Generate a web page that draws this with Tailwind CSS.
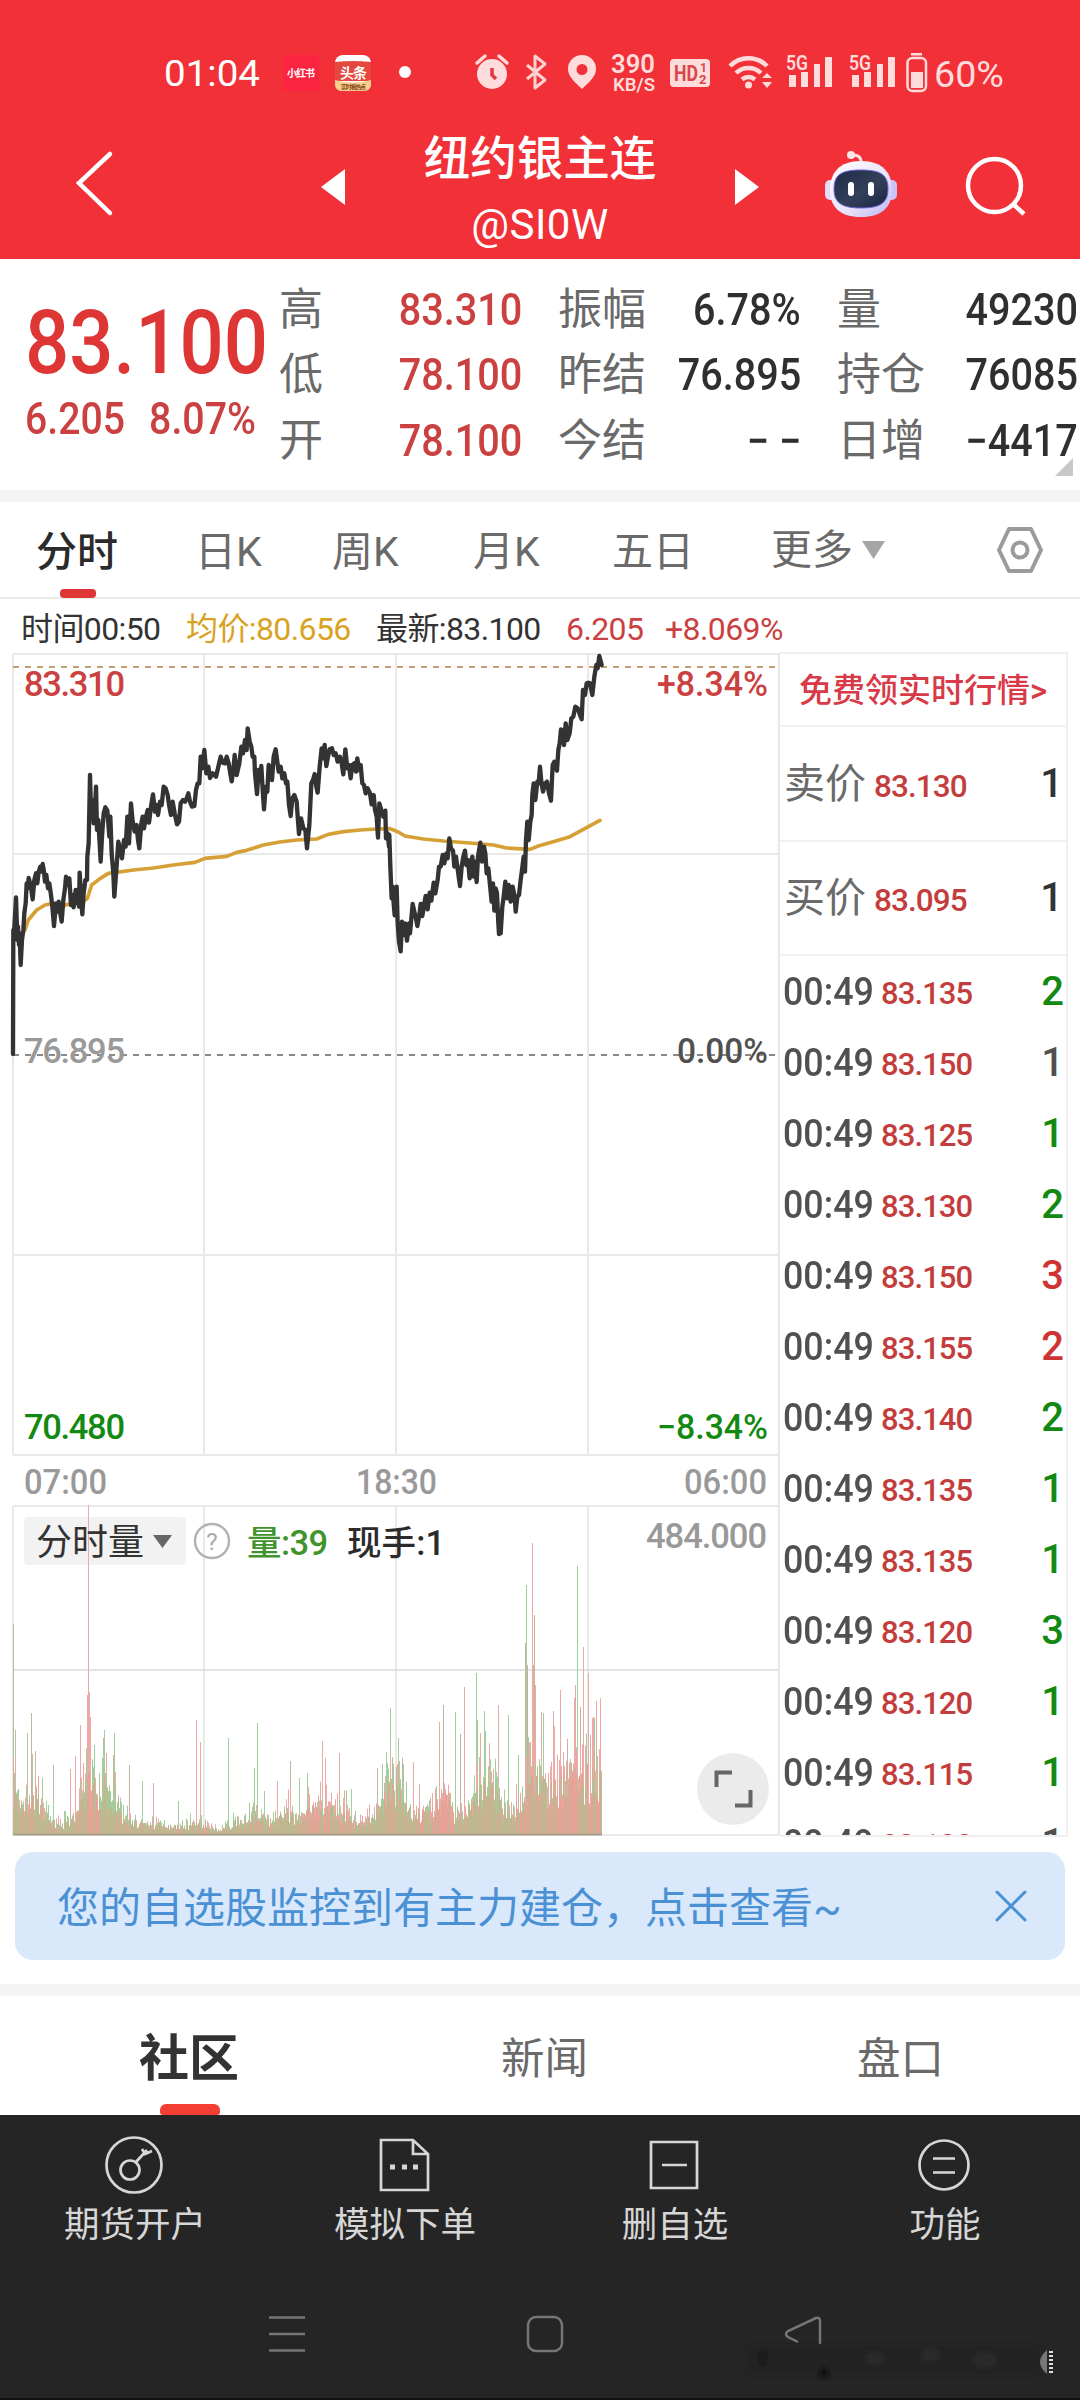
<!DOCTYPE html>
<html lang="zh-CN">
<head>
  <meta charset="UTF-8">
  <title>纽约银主连 @SI0W</title>
  <meta name="viewport" content="width=device-width, initial-scale=1.0">
  <script src="https://cdn.jsdelivr.net/npm/@tailwindcss/browser@4"></script>
  <style>
    body, svg text { font-family: Roboto, 'Noto Sans CJK SC', sans-serif; }
  </style>
</head>
<body class="bg-white w-[1080px] h-[2400px] overflow-hidden text-[#333]">

  <!-- status bar + title -->
  <header class="bg-[#f23037] h-[259px] text-white">
    <div class="h-[110px] flex items-end">
      <svg class="w-[1080px] h-[110px]" viewBox="0 0 1080 110" fill="#ffdcdc">
        <text x="164" y="86" font-size="36.5" fill="#fff" textLength="96" lengthAdjust="spacingAndGlyphs">01:04</text>
        <rect x="283" y="55" width="36" height="36" rx="4" fill="#fb2541"/>
        <text x="287" y="77" font-size="10" font-weight="700" fill="#fff" textLength="28">小红书</text>
        <g>
          <rect x="335" y="55" width="36" height="36" rx="8" fill="#fff"/>
          <path d="M335 62q18-2 36 0v19h-36z" fill="#e5483e"/>
          <path d="M335 80q18 5 36 0v4q0 7-7 7h-22q-7 0-7-7z" fill="#f6cf8c"/>
          <text x="340" y="78" font-size="14" font-weight="700" fill="#fff" textLength="27">头条</text>
          <text x="341" y="89" font-size="6" font-weight="700" fill="#8a4a20" textLength="25">实时看热点</text>
        </g>
        <circle cx="405" cy="72" r="6" fill="#fff"/>
        <!-- alarm -->
        <circle cx="492" cy="74" r="15"/>
        <path d="M477 63l8-7M507 63l-8-7" stroke="#ffdcdc" stroke-width="3.5" stroke-linecap="round"/>
        <path d="M492 68v7l4 4" stroke="#e23a40" stroke-width="3.5" fill="none"/>
        <!-- bluetooth -->
        <path d="M527 65l18 15-10 8V56l10 8-18 15" stroke="#ffd0d2" stroke-width="3" fill="none" stroke-linejoin="round"/>
        <path d="M582 55a14 14 0 0 0-14 14c0 8 8 14 14 20 6-6 14-12 14-20a14 14 0 0 0-14-14zm0 9a5.500 5.500 0 1 1 0 11 5.500 5.500 0 0 1 0-11z" fill-rule="evenodd"/>
        <text x="611" y="73" font-size="25" font-weight="600" textLength="44" lengthAdjust="spacingAndGlyphs">390</text>
        <text x="613" y="91" font-size="19" font-weight="600" textLength="42" lengthAdjust="spacingAndGlyphs">KB/S</text>
        <rect x="670" y="59" width="40" height="28" rx="4"/>
        <text x="674" y="81" font-size="22" font-weight="700" fill="#d9464b" textLength="24" lengthAdjust="spacingAndGlyphs">HD</text>
        <text x="700" y="72" font-size="12" font-weight="700" fill="#d9464b">1</text>
        <text x="699" y="84" font-size="13" font-weight="700" fill="#d9464b">2</text>
        <!-- wifi -->
        <g fill="none" stroke="#ffdcdc" stroke-width="4.500">
          <path d="M730 66a26 26 0 0 1 37 0"/>
          <path d="M736 73a18 18 0 0 1 25 0"/>
          <path d="M742 79.500a10 10 0 0 1 13 0"/>
        </g>
        <circle cx="748.500" cy="85" r="3.500"/>
        <path d="M762 78l5-5 5 5zM762 82l5 6 5-6z"/>
        <text x="786" y="70" font-size="19.500" font-weight="600" textLength="22" lengthAdjust="spacingAndGlyphs">5G</text>
        <path d="M789 75h7v12h-7zM801 72h7v15h-7zM814 64h6v23h-6zM825 57h7v30h-7z"/>
        <text x="849" y="70" font-size="19.500" font-weight="600" textLength="22" lengthAdjust="spacingAndGlyphs">5G</text>
        <path d="M852 75h7v12h-7zM864 72h7v15h-7zM877 64h6v23h-6zM888 57h7v30h-7z"/>
        <!-- battery -->
        <rect x="907.500" y="58" width="18.500" height="33" rx="5" fill="none" stroke="#ffdcdc" stroke-width="2.500"/>
        <path d="M911 53h11v2.500h-11zM911 72h12v16h-12z"/>
        <text x="934" y="87" font-size="37" textLength="70" lengthAdjust="spacingAndGlyphs">60%</text>
      </svg>
    </div>

    <div class="h-[149px] flex">
      <div class="w-[310px] pl-[72px] pt-[40px]">
        <svg class="w-[48px] h-[70px]" viewBox="0 0 48 70" fill="none" stroke="#fff" stroke-width="4.500"><path d="M38 4L7 33l31 30" stroke-linecap="round"/></svg>
      </div>
      <svg class="w-[40px] h-[149px]" viewBox="310 110 40 149"><path d="M345 169v36l-24-18z" fill="#fff"/></svg>
      <div class="w-[380px] flex flex-col items-center pt-[22px]">
        <div class="text-[46.500px] leading-[54px] font-medium">纽约银主连</div>
        <div class="text-[42px] leading-[50px] mt-[14px] tracking-[.5px]">@SI0W</div>
      </div>
      <svg class="w-[350px] h-[149px]" viewBox="730 110 350 149">
        <defs>
          <linearGradient id="head" x1="0" y1="0" x2="1" y2="1">
            <stop offset="0" stop-color="#fff"/><stop offset=".6" stop-color="#e9e2fb"/><stop offset="1" stop-color="#b9b3f3"/>
          </linearGradient>
          <linearGradient id="face" x1="0" y1="0" x2="1" y2="1">
            <stop offset="0" stop-color="#1e2c48"/><stop offset=".55" stop-color="#344059"/><stop offset="1" stop-color="#1a2440"/>
          </linearGradient>
        </defs>
        <path d="M735 169v36l24-18z" fill="#fff"/>
        <path d="M861 164q1-9-8-9" fill="none" stroke="#ffdfe2" stroke-width="3"/>
        <circle cx="851" cy="155" r="4" fill="#ffe6e8"/>
        <rect x="825" y="180" width="12" height="20" rx="5" fill="#e5dcf8"/>
        <rect x="885" y="180" width="12" height="20" rx="5" fill="#c9c3f5"/>
        <path d="M861 161c22 0 31 12 31 29s-10 27-31 27-31-10-31-27 9-29 31-29z" fill="url(#head)"/>
        <path d="M861 170c20 0 27 5 27 19s-8 19-27 19-27-5-27-19 7-19 27-19z" fill="url(#face)" stroke="#6f63d6" stroke-width="1"/>
        <rect x="848" y="182" width="6" height="14" rx="3" fill="#fff"/>
        <rect x="868" y="182" width="6" height="14" rx="3" fill="#fff"/>
        <circle cx="994.500" cy="185.500" r="26.500" fill="none" stroke="#fff" stroke-width="4.500"/>
        <path d="M1013 204l11 10" stroke="#fff" stroke-width="4.500"/>
      </svg>
    </div>
  </header>

  <!-- quote summary -->
  <section class="h-[231px] flex relative">
    <div class="w-[279px] pl-[25px] pt-[36px] text-[#de3535] whitespace-nowrap">
      <div class="text-[89px] leading-[96px] font-medium origin-left scale-x-[.875]">83.100</div>
      <div class="flex text-[44px] leading-[50px] mt-[3px] font-medium text-[#cb4040]">
        <span class="w-[124px] origin-left scale-x-[.89]">6.205</span><span class="origin-left scale-x-[.895]">8.07%</span>
      </div>
    </div>
    <div id="stats" class="grid grid-cols-[243px_36px_243px_36px_241px] auto-rows-[65.500px] pt-[18px] text-[44px] items-center"></div>
    <svg class="absolute right-[7px] top-[199px] w-[18px] h-[18px]" viewBox="0 0 18 18"><path d="M18 0v18H0z" fill="#c8c8c8"/></svg>
  </section>
  <div class="h-[12px] bg-[#f4f4f4]"></div>

  <!-- period tabs -->
  <nav class="h-[97px] border-b-2 border-[#ececec] flex text-[41px] leading-[100px] text-[#6a6a6a] relative">
    <div class="w-[195px] pl-[36px] font-medium text-[#2b2b2b]">分时</div>
    <div class="w-[137px]">日K</div>
    <div class="w-[141px]">周K</div>
    <div class="w-[139px]">月K</div>
    <div class="w-[159px]">五日</div>
    <div class="w-[222px] flex items-center gap-[9px]"><span>更多</span>
      <svg class="w-[23px] h-[18px]" viewBox="0 0 23 18"><path d="M0 0h23L11.500 18z" fill="#a5a5a5"/></svg>
    </div>
    <svg class="w-[54px] h-[96px]" viewBox="0 0 54 96" fill="none" stroke="#9b9b9b" stroke-width="4">
      <path d="M16 27h22l10 21-10 21H16L6 48z" stroke-linejoin="round"/>
      <circle cx="27" cy="48" r="7.500"/>
    </svg>
    <div class="absolute left-[60px] bottom-[-1px] w-[36px] h-[9px] rounded-[4px] bg-[#de3535]"></div>
  </nav>

  <div class="h-[53px] flex pl-[21px] text-[32px] leading-[60px] tracking-[-.6px]">
    <span class="w-[165px]">时间00:50</span>
    <span class="w-[190px] text-[#d9a223]">均价:80.656</span>
    <span class="w-[190px]">最新:83.100</span>
    <span class="w-[99px] text-[#cb4040]">6.205</span>
    <span class="text-[#cb4040]">+8.069%</span>
  </div>

  <!-- chart + order flow -->
  <main class="flex h-[1185px]">
    <svg class="w-[780px] h-[1185px]" viewBox="0 652 780 1185">
      <g stroke="#e9e9e9" stroke-width="2" fill="none">
        <path d="M13 654H780M13 854H780M13 1255H780M13 1455H780M13 1506H780M13 1835H780"/>
        <path d="M13 654V1455M204 654V1455M396 654V1455M588 654V1455M13 1506V1835M204 1506V1835M396 1506V1835M588 1506V1835"/>
        <path d="M13 1670H780" stroke="#dadada" stroke-width="1.500"/>
        <path d="M779 654V1835" stroke-width="2.500"/>
      </g>
      <path d="M13 667H775" stroke="#c0a070" stroke-width="2" stroke-dasharray="6 6"/>
      <path d="M13 1055H775" stroke="#8a8a8a" stroke-width="2" stroke-dasharray="6 6"/>

      <rect x="24" y="1517" width="162" height="48" rx="4" fill="#f2f2f2"/>
      <g id="volume" fill="none" stroke-width="1"></g>

      <!-- average + price, drawn on a 3x grid -->
      <g transform="translate(0 640) scale(.33333)" fill="none" stroke-linejoin="round" stroke-linecap="round">
        <polyline stroke="#d5a136" stroke-width="11" points="40,900 60,890 75,870 85,840 110,810 135,795 160,790 190,796 220,790 250,785 262,775 275,735 300,716 325,700 350,697 400,690 460,684 520,675 585,667 615,655 680,649 710,637 740,631 790,615 840,606 890,600 950,597 985,583 1030,575 1080,570 1130,567 1170,566 1195,576 1215,588 1270,597 1330,603 1410,609 1480,615 1520,624 1590,628 1615,618 1670,602 1710,590 1750,568 1800,541"/>
        <polyline stroke="#333" stroke-width="13" points="39,1242 40,870 43,865 48,772 52,900 54,860 57,915 59,880 62,975 66,900 70,870 73,820 77,790 80,730 83,745 86,714 92,735 98,778 103,720 108,700 112,730 116,695 121,680 124,695 128,672 132,695 135,725 139,705 144,745 148,730 153,765 157,800 162,858 168,790 172,815 176,785 180,815 185,845 190,780 195,745 198,710 204,735 208,715 213,795 217,765 221,802 227,750 232,790 235,760 237,800 239,698 243,770 247,823 251,760 256,720 261,720 262,650 266,610 270,405 273,510 277,480 281,550 285,505 288,440 291,570 295,540 302,665 306,590 311,520 316,502 322,512 328,590 331,530 335,640 340,700 343,770 349,690 355,605 360,625 366,655 372,600 377,620 382,530 387,610 393,490 398,545 404,575 410,555 414,600 418,625 424,550 428,530 432,565 438,530 443,510 447,548 453,500 459,463 465,515 471,495 474,525 480,485 485,495 491,440 497,445 503,465 508,500 513,525 518,485 524,520 531,553 537,545 542,490 549,480 555,485 560,475 565,460 570,485 576,500 583,498 588,450 593,430 598,430 602,350 607,385 613,330 619,400 625,380 630,414 638,400 648,410 655,380 662,350 668,368 675,370 680,350 686,370 690,395 695,424 700,390 704,345 710,405 718,370 724,320 729,340 735,300 740,330 743,265 749,305 754,320 758,350 763,350 765,400 771,462 776,390 780,410 784,378 788,450 792,508 797,440 802,455 806,375 812,385 816,420 821,350 827,328 832,365 836,395 842,380 847,415 853,400 858,430 862,425 867,495 872,528 877,475 883,465 890,485 893,530 897,582 903,535 910,565 916,570 921,625 928,555 934,430 939,420 944,402 948,435 953,458 959,380 965,325 970,355 974,315 979,378 984,350 989,328 996,325 1001,345 1007,340 1013,365 1020,350 1025,370 1030,403 1036,328 1042,385 1047,375 1052,415 1057,375 1063,370 1068,395 1072,355 1077,390 1082,375 1087,430 1092,435 1097,460 1103,445 1110,460 1115,493 1121,465 1125,510 1130,530 1134,593 1138,490 1144,510 1150,530 1156,512 1158,595 1163,580 1167,620 1168,585 1171,680 1175,775 1178,740 1181,790 1184,826 1190,740 1193,850 1197,905 1202,934 1206,845 1210,885 1215,850 1221,902 1227,850 1230,880 1238,792 1244,820 1248,835 1252,858 1258,825 1262,792 1267,828 1273,790 1277,768 1283,808 1289,758 1294,782 1301,728 1306,760 1313,720 1317,680 1322,680 1328,645 1333,670 1339,640 1343,655 1348,595 1353,625 1359,632 1363,680 1368,650 1372,680 1380,738 1385,680 1390,650 1395,632 1399,675 1404,660 1409,715 1414,665 1417,650 1421,710 1425,665 1430,726 1434,650 1441,608 1446,665 1452,620 1456,640 1460,700 1465,685 1470,735 1475,785 1479,730 1483,812 1487,745 1491,760 1495,850 1497,882 1502,880 1507,800 1511,770 1516,725 1521,775 1526,735 1532,785 1538,740 1544,770 1547,815 1552,770 1557,765 1562,720 1566,690 1571,650 1575,695 1578,600 1582,545 1586,600 1591,545 1595,525 1597,465 1601,430 1606,480 1612,425 1616,430 1620,380 1624,425 1629,455 1636,430 1641,425 1647,460 1653,482 1658,375 1663,365 1671,392 1675,330 1679,310 1683,268 1688,290 1692,315 1697,250 1702,300 1709,280 1714,235 1720,230 1726,200 1733,205 1740,225 1745,238 1749,150 1755,165 1760,130 1765,128 1770,130 1777,165 1783,110 1789,75 1793,85 1798,48 1805,75"/>
      </g>

      <g font-size="34.500">
        <g font-weight="500">
          <text x="24" y="696" fill="#cb4040" textLength="101">83.310</text>
          <text x="657" y="696" fill="#cb4040" textLength="111" lengthAdjust="spacingAndGlyphs">+8.34%</text>
          <text x="24" y="1439" fill="#128912" textLength="101">70.480</text>
          <text x="657" y="1439" fill="#128912" textLength="111" lengthAdjust="spacingAndGlyphs">−8.34%</text>
        </g>
        <text x="24" y="1063" fill="#999" font-weight="500" textLength="101">76.895</text>
        <text x="677" y="1063" fill="#505050" textLength="91" font-weight="500" lengthAdjust="spacingAndGlyphs">0.00%</text>
        <g fill="#999" font-weight="500">
          <text x="24" y="1494" textLength="83" lengthAdjust="spacingAndGlyphs">07:00</text>
          <text x="356" y="1494" textLength="81" lengthAdjust="spacingAndGlyphs">18:30</text>
          <text x="684" y="1494" textLength="83" lengthAdjust="spacingAndGlyphs">06:00</text>
          <text x="646" y="1548" textLength="121">484.000</text>
        </g>
        <text x="36" y="1555" font-size="36" fill="#333" textLength="108">分时量</text>
        <text x="247" y="1555" fill="#3f942c" font-weight="500" textLength="81">量:39</text>
        <text x="347" y="1555" fill="#2b2b2b" textLength="98" font-weight="500">现手:1</text>
      </g>
      <path d="M153 1535h19l-9.500 13z" fill="#666"/>
      <circle cx="212" cy="1541" r="17" fill="none" stroke="#b3b3b3" stroke-width="2.500"/>
      <text x="212" y="1549.500" font-size="24" text-anchor="middle" fill="#aaa">?</text>
      <circle cx="733" cy="1789" r="36" fill="#ebebeb"/>
      <path d="M732 1772.500H716.500V1787M735 1805.500H750.500V1790" fill="none" stroke="#666" stroke-width="4"/>
    </svg>

    <aside class="w-[288px] h-[1185px] border-2 border-l-0 border-[#efefef] overflow-hidden">
      <div class="h-[73px] border-b-2 border-[#f1f1f1] pl-[19px] text-[33px] leading-[74px] font-medium text-[#d93a48] whitespace-nowrap">免费领实时行情&gt;</div>
      <div class="h-[115px] border-b-2 border-[#f1f1f1] flex items-center pl-[4px] pr-[3px]">
        <span class="w-[90px] text-[41px] text-[#6a6a6a] pt-[2px]">卖价</span>
        <span class="flex-1 text-[31.500px] pt-[6px] font-medium tracking-[-.9px] text-[#c43d3d]">83.130</span>
        <span class="text-[40px] font-medium">1</span>
      </div>
      <div class="h-[114px] border-b-2 border-[#f1f1f1] flex items-center pl-[4px] pr-[3px]">
        <span class="w-[90px] text-[41px] text-[#6a6a6a] pt-[2px]">买价</span>
        <span class="flex-1 text-[31.500px] pt-[6px] font-medium tracking-[-.9px] text-[#c43d3d]">83.095</span>
        <span class="text-[40px] font-medium">1</span>
      </div>
      <div id="ticks"></div>
    </aside>
  </main>

  <!-- notice -->
  <div class="h-[147px] pt-[15px] px-[15px]">
    <div class="h-[108px] rounded-[18px] bg-[#d9e8fa] flex items-center justify-between pl-[42px] pr-[38px]">
      <span class="text-[42px] text-[#4a90d4] pt-[4px]">您的自选股监控到有主力建仓，点击查看~</span>
      <svg class="w-[32px] h-[32px]" viewBox="0 0 32 32" stroke="#4a90d4" stroke-width="3" stroke-linecap="round"><path d="M2 2l28 28M30 2L2 30"/></svg>
    </div>
  </div>
  <div class="h-[12px] bg-[#f4f4f4]"></div>

  <div class="h-[119px] flex text-[43.500px] leading-[127px] text-[#6a6a6a] relative">
    <div class="w-[501px] pl-[139px] text-[50px] font-bold text-[#333]">社区</div>
    <div class="w-[356px]">新闻</div>
    <div>盘口</div>
    <div class="absolute left-[160px] bottom-0 w-[60px] h-[11px] rounded-t-[6px] rounded-b-[3px] bg-[#f33f33]"></div>
  </div>

  <!-- bottom bar -->
  <footer class="bg-[#252525] h-[285px] border-b-2 border-[#101010]">
    <div class="grid grid-cols-4 text-center text-[35.500px] text-[#d6d6d6] h-[150px]">
      <div class="flex flex-col items-center pt-[20px]">
        <svg class="w-[60px] h-[60px]" viewBox="0 0 60 60" fill="none" stroke="#d6d6d6" stroke-width="2.700"><circle cx="29" cy="30" r="27.500"/><circle cx="25" cy="35" r="9.500"/><path d="M31 27l11-12M37 14l3 5 7-3"/></svg>
        <span class="leading-[40px] mt-[10px]">期货开户</span>
      </div>
      <div class="flex flex-col items-center pt-[20px]">
        <svg class="w-[60px] h-[60px]" viewBox="0 0 60 60" fill="none" stroke="#d6d6d6" stroke-width="2.700"><path d="M6 5h32l15 14v36H6zM38 5v14h15"/><path d="M15 32h5M27 32h5M38 32h5" stroke-width="5"/></svg>
        <span class="leading-[40px] mt-[10px]">模拟下单</span>
      </div>
      <div class="flex flex-col items-center pt-[20px]">
        <svg class="w-[60px] h-[60px]" viewBox="0 0 60 60" fill="none" stroke="#d6d6d6" stroke-width="2.700"><path d="M6 7h46v46H6zM17 30h25"/></svg>
        <span class="leading-[40px] mt-[10px]">删自选</span>
      </div>
      <div class="flex flex-col items-center pt-[20px]">
        <svg class="w-[60px] h-[60px]" viewBox="0 0 60 60" fill="none" stroke="#d6d6d6" stroke-width="2.700"><circle cx="29" cy="30" r="24.500"/><path d="M18 23.500h22M18 37.500h22"/></svg>
        <span class="leading-[40px] mt-[10px]">功能</span>
      </div>
    </div>
    <svg class="w-[1080px] h-[133px]" viewBox="0 2265 1080 133" fill="none" stroke="#767676" stroke-width="2.500">
      <defs><filter id="soft" x="-10%" y="-50%" width="120%" height="200%"><feGaussianBlur stdDeviation="2.5"/></filter></defs>
      <path d="M269 2317.500h36M269 2334h36M269 2350.500h36"/>
      <rect x="528" y="2317" width="34" height="34" rx="8"/>
      <path d="M798 2342l-10-5q-4-3 0-6l28-13q4-1 4 3v23"/>
      <g stroke="none" filter="url(#soft)">
        <rect x="748" y="2347" width="290" height="26" fill="#222"/>
        <ellipse cx="763" cy="2358" rx="5" ry="9" fill="#1a1a1a"/>
        <circle cx="824" cy="2373" r="5" fill="#0e0e0e"/>
        <ellipse cx="875" cy="2358" rx="10" ry="7" fill="#292929"/>
        <ellipse cx="930" cy="2355" rx="10" ry="7" fill="#2a2a2a"/>
        <ellipse cx="985" cy="2360" rx="12" ry="8" fill="#292929"/>
      </g>
      <path d="M1047 2350q-14 12 0 24z" fill="#777" stroke="none"/>
      <path d="M1051 2351v23" stroke="#ddd" stroke-width="4" stroke-dasharray="2 2"/>
    </svg>
  </footer>

  <script>
    const stats = [
      ["高", "83.310", 1, "振幅", "6.78%", "量", "49230"],
      ["低", "78.100", 1, "昨结", "76.895", "持仓", "76085"],
      ["开", "78.100", 1, "今结", "− −", "日增", "−4417"]
    ];
    const cell = (label, value, red) =>
      `<div class="flex items-center justify-between whitespace-nowrap"><span class="text-[#6a6a6a]">${label}</span><span class="font-medium origin-right scale-x-[.9] ${red ? "text-[#cb4040]" : "text-[#2f2f2f]"}">${value}</span></div>`;
    document.getElementById("stats").innerHTML = stats.map(s =>
      cell(s[0], s[1], true) + "<i></i>" + cell(s[3], s[4]) + "<i></i>" + cell(s[5], s[6])).join("");

    const color = { g: "text-[#128912]", r: "text-[#cf3434]", k: "text-[#505050]" };
    const ticks = [
      ["83.135", 2, "g"], ["83.150", 1, "k"], ["83.125", 1, "g"], ["83.130", 2, "g"],
      ["83.150", 3, "r"], ["83.155", 2, "r"], ["83.140", 2, "g"], ["83.135", 1, "g"],
      ["83.135", 1, "g"], ["83.120", 3, "g"], ["83.120", 1, "g"], ["83.115", 1, "g"],
      ["83.100", 1, "k"]
    ];
    document.getElementById("ticks").innerHTML = ticks.map(t => `
      <div class="h-[71px] flex items-center pl-[3px] pr-[2px]">
        <span class="w-[98px] text-[38.500px] font-medium origin-left scale-x-[.93] text-[#505050]">00:49</span>
        <span class="flex-1 text-[31px] pt-[5px] font-medium tracking-[-.9px] text-[#c43d3d]">${t[0]}</span>
        <span class="text-[40px] font-medium ${color[t[2]]}">${t[1]}</span>
      </div>`).join("");

    // volume bars: [x, typical height] envelope, then the tall spikes [x, height, colour]
    const env = [[13,62],[18,32],[30,34],[36,42],[45,18],[55,14],[70,12],[78,22],[85,52],[92,54],[97,50],[104,55],[112,30],[116,46],[122,16],[135,12],[160,10],[180,8],[200,12],[210,6],[225,6],[235,14],[255,18],[270,14],[285,22],[300,20],[310,26],[330,26],[345,22],[358,10],[372,18],[380,30],[390,54],[400,50],[410,26],[420,22],[435,26],[448,40],[455,20],[470,26],[485,54],[500,38],[512,20],[522,44],[532,64],[545,54],[555,46],[570,60],[580,62],[590,60],[601,60]];
    const spikes = [[13,211,"d"],[15,105,"g"],[27,102,"g"],[31,122,"d"],[35,84,"r"],[53,70,"d"],[70,66,"r"],[75,79,"r"],[80,110,"r"],[87,140,"r"],[88,330,"r"],[89.500,143,"r"],[90,118,"r"],[103,97,"d"],[106,82,"r"],[114,102,"g"],[113,80,"d"],[129,70,"d"],[142,54,"g"],[153,52,"r"],[178,34,"g"],[196,115,"r"],[200,93,"r"],[228,97,"g"],[254,67,"g"],[257,112,"g"],[264,44,"g"],[277,54,"r"],[290,74,"d"],[299,57,"g"],[307,62,"g"],[322,94,"r"],[325,77,"r"],[339,82,"r"],[351,46,"g"],[377,67,"d"],[390.500,127,"g"],[392,78,"d"],[398,97,"g"],[402,77,"d"],[413,73,"r"],[419,51,"r"],[439,113,"r"],[443.500,130,"d"],[455,123,"g"],[460,101,"d"],[464,148,"r"],[476,162,"g"],[477,115,"g"],[484,124,"g"],[485.500,104,"g"],[498,130,"r"],[508,120,"g"],[518,80,"g"],[525,192,"d"],[526.500,250,"g"],[527,170,"d"],[532,292,"r"],[533,170,"r"],[534.500,220,"d"],[535,150,"r"],[541,123,"r"],[543,122,"g"],[553,124,"r"],[560,145,"r"],[567,96,"d"],[574,137,"r"],[575,150,"r"],[577,269,"g"],[580,128,"d"],[583,188,"r"],[588,162,"r"],[590,100,"r"],[593,118,"r"],[596,134,"r"],[599,86,"r"]];
    const base = 1835, tone = { r: "#edaaa5", g: "#a0cf9c", d: "#c3b49e" };
    let seed = 7, out = "", e = 0;
    const rnd = () => (seed = (seed * 16807) % 2147483647) / 2147483647;
    spikes.forEach(([x, h, c]) => out += `<path d="M${Math.floor(x) + .5} ${base}V${base - h}" stroke="${tone[c]}"/>`);
    for (let x = 13.5; x < 602; x++) {
      while (e < env.length - 2 && x > env[e + 1][0]) e++;
      const [x0, h0] = env[e], [x1, h1] = env[e + 1];
      const h = h0 + (h1 - h0) * (x - x0) / (x1 - x0);
      const redder = x > 520 || (x > 300 && x < 350) || (x > 420 && x < 455) || (x > 85 && x < 95);
      const a = h * (.45 + rnd() * .75), b = a + h * rnd() * rnd() * 1.3;
      const top = rnd() < (redder ? .72 : .4) ? tone.r : tone.g;
      out += `<path d="M${x} ${base}V${base - b}" stroke="${top}"/><path d="M${x} ${base}V${base - a}" stroke="${rnd() < (redder ? .55 : .15) ? "#e7a297" : "#bfb78f"}"/>`;
    }
    document.getElementById("volume").innerHTML = out + '<path d="M13 1834.5H602" stroke="#a9a08c" stroke-width="2"/>';
  </script>
</body>
</html>
